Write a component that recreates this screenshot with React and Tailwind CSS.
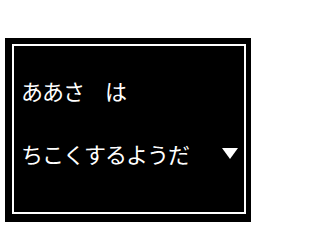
export default function App() {
  return (
    <div className="w-[259px] h-[224px] bg-white pt-[38px] pl-[5px]">
      <div className="w-[246px] h-[184px] bg-black pt-[6px] pl-[7px] pr-[5px] pb-[8px]">
        <div
          className="w-full h-full border-2 border-white text-white pl-[7px] pt-[28px]"
          style={{ fontFamily: '"Noto Sans CJK JP", sans-serif' }}
        >
          <div className="flex items-center h-[32px] text-[22px] leading-none tracking-[-1px]">ああさ　は</div>
          <div className="flex items-center h-[32px] mt-[31px] text-[22px] leading-none tracking-[-1px]">
            <span>ちこくするようだ</span>
            <svg width="16" height="11" viewBox="0 0 16 11" className="ml-[33px]">
              <polygon points="0,0 16,0 8,11" fill="white" />
            </svg>
          </div>
        </div>
      </div>
    </div>
  );
}
